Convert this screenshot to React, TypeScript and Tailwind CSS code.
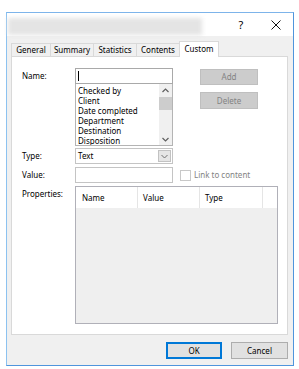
export default function App() {
  const items = ['Checked by', 'Client', 'Date completed', 'Department', 'Destination', 'Disposition']
  return (
    <div className="w-[299px] h-[369px] bg-white pt-[12px] pl-[6px] font-['Noto_Sans',sans-serif] text-[8px] leading-[10px] text-black">
      <div className="w-[288px] h-[354px] border border-[#4f95dc] border-l-[#8cc2f0] border-t-[#7db4ea] flex flex-col">
        {/* title bar */}
        <div className="h-[23px] shrink-0 bg-white flex items-center pr-[12px]">
          <div className="ml-[1px] mt-[3px] w-[194px] h-[17px] bg-[#e4e4e4] blur-[2px]"></div>
          <div className="ml-auto w-[10px] text-center text-[11px] leading-[12px]">?</div>
          <div className="ml-[25px] w-[10px] h-[10px]">
            <svg width="10" height="10" viewBox="0 0 10 10">
              <path d="M0.5 0.5 L9.5 9.5 M9.5 0.5 L0.5 9.5" stroke="#111" strokeWidth="1" fill="none" />
            </svg>
          </div>
        </div>

        {/* body */}
        <div className="flex-1 bg-[#f0f0f0] pt-[5px] pl-[4px] pr-[5px] flex flex-col">
          {/* tabs */}
          <div className="flex items-end h-[15px] relative z-10">
            <div className="w-[40px] h-[13px] border border-b-0 border-[#d9d9d9] bg-[#f0f0f0] flex items-center justify-center">General</div>
            <div className="-ml-px w-[44px] h-[13px] border border-b-0 border-[#d9d9d9] bg-[#f0f0f0] flex items-center justify-center">Summary</div>
            <div className="-ml-px w-[44px] h-[13px] border border-b-0 border-[#d9d9d9] bg-[#f0f0f0] flex items-center justify-center">Statistics</div>
            <div className="-ml-px w-[44px] h-[13px] border border-b-0 border-[#d9d9d9] bg-[#f0f0f0] flex items-center justify-center">Contents</div>
            <div className="-ml-px w-[40px] h-[16px] mb-[-1px] border border-b-0 border-[#d9d9d9] bg-white flex items-start justify-center pt-[2px]">Custom</div>
          </div>

          {/* panel */}
          <div className="w-[277px] h-[279px] border border-[#d9d9d9] bg-white pt-[11px] pl-[10px] flex flex-col">
            {/* name row */}
            <div className="flex">
              <div className="w-[53px] h-[16px] flex items-center">Name:</div>
              <div className="w-[98px] flex flex-col">
                <div className="h-[16px] border border-[#a9a9a9] flex items-center pl-[2px]">
                  <div className="w-px h-[10px] bg-black"></div>
                </div>
                <div className="h-[62px] border border-t-0 border-[#b4b4b4] flex">
                  <div className="flex-1 pl-[2px] pt-[2px] flex flex-col overflow-hidden">
                    {items.map((t) => (
                      <div key={t} className="h-[10px] shrink-0 whitespace-nowrap">{t}</div>
                    ))}
                  </div>
                  <div className="w-[13px] bg-[#f0f0f0] flex flex-col">
                    <div className="h-[13px] flex items-center justify-center">
                      <svg width="7" height="5" viewBox="0 0 7 5">
                        <path d="M0.5 4 L3.5 1 L6.5 4" stroke="#606060" strokeWidth="1.2" fill="none" />
                      </svg>
                    </div>
                    <div className="h-[13px] bg-[#cdcdcd]"></div>
                    <div className="flex-1"></div>
                    <div className="h-[12px] flex items-center justify-center">
                      <svg width="7" height="5" viewBox="0 0 7 5">
                        <path d="M0.5 1 L3.5 4 L6.5 1" stroke="#606060" strokeWidth="1.2" fill="none" />
                      </svg>
                    </div>
                  </div>
                </div>
              </div>
              <div className="ml-[27px] flex flex-col">
                <div className="mt-[1px] w-[58px] h-[16px] bg-[#cccccc] border border-[#bfbfbf] text-[#838383] flex items-center justify-center">Add</div>
                <div className="mt-[7px] w-[58px] h-[17px] bg-[#cccccc] border border-[#bfbfbf] text-[#838383] flex items-center justify-center">Delete</div>
              </div>
            </div>

            {/* type row */}
            <div className="flex mt-[2px]">
              <div className="w-[53px] h-[16px] flex items-center">Type:</div>
              <div className="w-[98px] h-[16px] border border-[#c4c4c4] flex items-center pl-[2px] pr-px">
                <span className="flex-1">Text</span>
                <div className="w-[13px] h-[12px] bg-[#e5e5e5] border border-[#c2c2c2] flex items-center justify-center">
                  <svg width="7" height="5" viewBox="0 0 7 5">
                    <path d="M0.5 1 L3.5 4 L6.5 1" stroke="#707070" strokeWidth="1" fill="none" />
                  </svg>
                </div>
              </div>
            </div>

            {/* value row */}
            <div className="flex items-center mt-[3px]">
              <div className="w-[53px] h-[16px] flex items-center">Value:</div>
              <div className="w-[98px] h-[16px] border border-[#c4c4c4]"></div>
              <div className="ml-[7px] w-[11px] h-[11px] border border-[#c8c8c8] bg-white"></div>
              <div className="ml-[3px] text-[#838383]">Link to content</div>
            </div>

            {/* properties row */}
            <div className="flex mt-[3px]">
              <div className="w-[53px] pt-[3px]">Properties:</div>
              <div className="w-[203px] h-[138px] border border-[#b0b0b8] bg-[#efefef] flex flex-col">
                <div className="h-[21px] bg-white flex">
                  <div className="w-[62px] border-r border-[#e5e5e5] pl-[6px] flex items-center">Name</div>
                  <div className="w-[62px] border-r border-[#e5e5e5] pl-[5px] flex items-center">Value</div>
                  <div className="w-[63px] border-r border-[#e5e5e5] pl-[5px] flex items-center">Type</div>
                  <div className="flex-1"></div>
                </div>
              </div>
            </div>
          </div>

          {/* dialog buttons */}
          <div className="flex justify-end gap-[9px] mt-[7px]">
            <div className="w-[56px] h-[17px] border-2 border-[#0078d7] bg-[#e1e1e1] flex items-center justify-center">OK</div>
            <div className="w-[57px] h-[17px] border border-[#adadad] bg-[#e1e1e1] flex items-center justify-center">Cancel</div>
          </div>
        </div>
      </div>
    </div>
  )
}
